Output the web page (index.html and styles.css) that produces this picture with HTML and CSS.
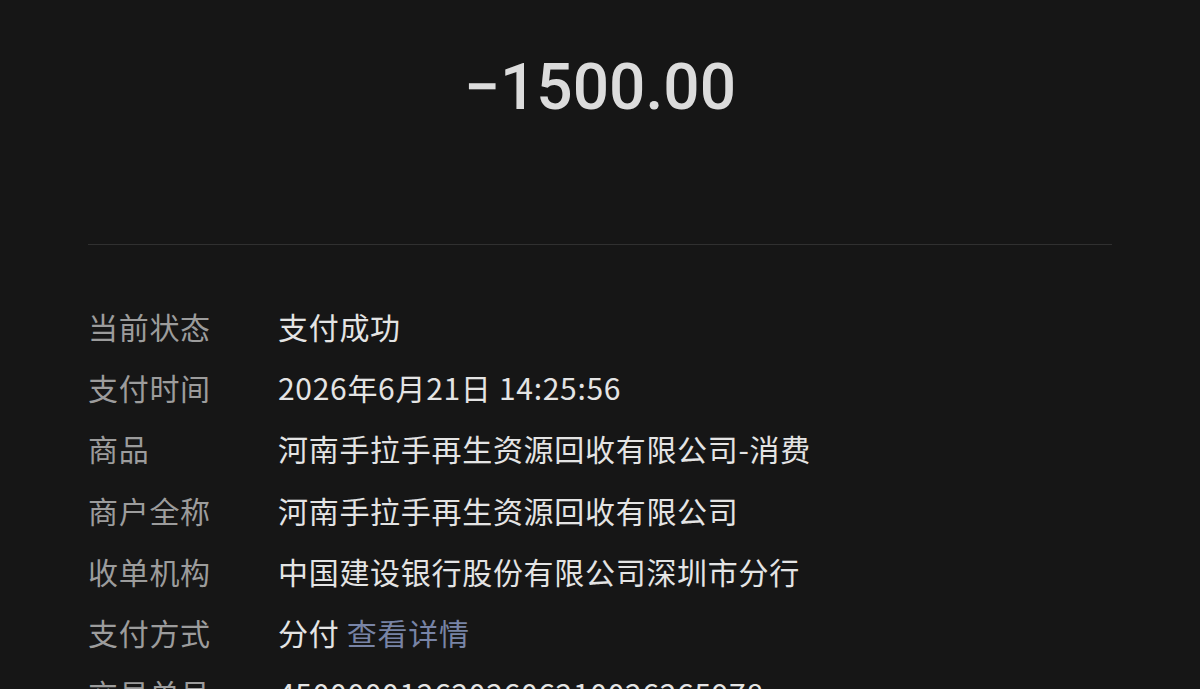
FILE: index.html
```html
<!DOCTYPE html>
<html lang="zh-CN">
<head>
  <meta charset="UTF-8">
  <meta name="viewport" content="width=device-width, initial-scale=1">
  <title>账单详情</title>
  <link rel="stylesheet" href="styles.css">
</head>
<body>

  <div class="bill">
    <div class="amount">−1500.00</div>
    <div class="divider"></div>

    <dl class="detail-list">
      <div class="row">
        <dt>当前状态</dt>
        <dd>支付成功</dd>
      </div>
      <div class="row">
        <dt>支付时间</dt>
        <dd>2026年6月21日 14:25:56</dd>
      </div>
      <div class="row">
        <dt>商品</dt>
        <dd>河南手拉手再生资源回收有限公司-消费</dd>
      </div>
      <div class="row">
        <dt>商户全称</dt>
        <dd>河南手拉手再生资源回收有限公司</dd>
      </div>
      <div class="row">
        <dt>收单机构</dt>
        <dd>中国建设银行股份有限公司深圳市分行</dd>
      </div>
      <div class="row">
        <dt>支付方式</dt>
        <dd>分付 <a class="link" href="#">查看详情</a></dd>
      </div>
      <div class="row">
        <dt>交易单号</dt>
        <dd>4500000126202606210026265978</dd>
      </div>
    </dl>
  </div>

</body>
</html>
```

FILE: styles.css
```css
body {
  margin: 0;
  background: #161616;
  color: #e2e2e2;
  font-family: "Noto Sans CJK SC", "Noto Sans", sans-serif;
  overflow: hidden;
}

.bill {
  padding: 0 88px;
}

.amount {
  height: 176px;
  line-height: 176px;
  text-align: center;
  font-family: Roboto, "Noto Sans", sans-serif;
  font-size: 64px;
  font-weight: 500;
  color: #dcdcdc;
}

.divider {
  height: 1px;
  margin-top: 68px;
  background: #303030;
}

.detail-list {
  margin: 51px 0 0;
}

.row {
  display: flex;
  height: 61.2px;
  line-height: 61px;
  font-size: 30px;
  letter-spacing: 0.7px;
}

.row dt {
  width: 190px;
  flex-shrink: 0;
  color: #9c9c9c;
}

.row dd {
  margin: 0;
  white-space: nowrap;
  color: #e4e4e4;
}

.link {
  color: #7884a6;
  text-decoration: none;
}
```
